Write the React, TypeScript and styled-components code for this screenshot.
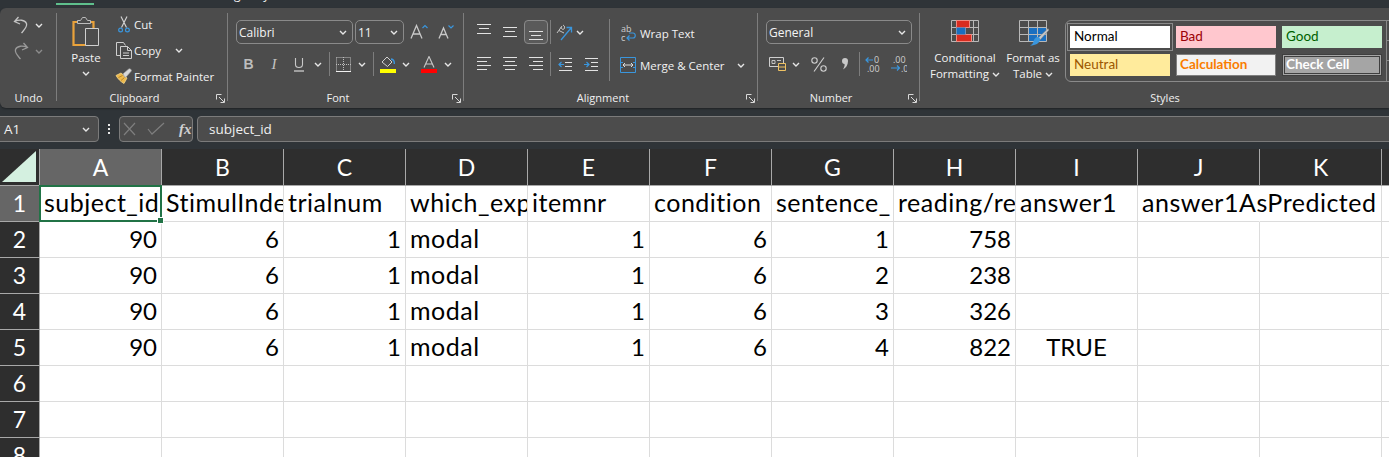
import React from 'react';
import styled, { createGlobalStyle } from 'styled-components';

const UI_FONT = '"Open Sans", "Noto Sans", sans-serif';
const CELL_FONT = 'Lato, "Open Sans", sans-serif';
const RIBBON = '#4c4c4c';
const DARK = '#2f3438';
const LINE = '#8a8a8a';
const BLUE = '#3a96dd';

const GlobalStyle = createGlobalStyle`
  html, body { margin: 0; padding: 0; background: #fff; overflow: hidden; }
  body { font-family: ${UI_FONT}; }
`;

const Page = styled.div`
  width: 1389px;
  height: 457px;
  overflow: hidden;
  background: ${DARK};
  display: flex;
  flex-direction: column;
`;

/* tab strip, only the bottom few pixels are on screen */
const TabStrip = styled.div`
  height: 8px;
  flex: none;
  overflow: hidden;
  display: flex;
  align-items: flex-end;
  padding-bottom: 3px;
  box-sizing: border-box;
`;
const TabMark = styled.div`
  width: 38px;
  height: 2px;
  margin-left: 56px;
  background: #5fbf8c;
  flex: none;
`;
const TabText = styled.div`
  margin-left: 126px;
  margin-bottom: 3px;
  font-size: 12px;
  line-height: 14px;
  color: #f0f0f0;
  white-space: nowrap;
  flex: none;
`;

const Ribbon = styled.div`
  height: 100px;
  flex: none;
  display: flex;
  background: ${RIBBON};
  border-radius: 6px 0 0 6px;
  box-shadow: 0 1px 2px rgba(0, 0, 0, 0.35);
  color: #f2f2f2;
  font-size: 11.5px;
`;

const Group = styled.div<{ $w: number; $last?: boolean }>`
  position: relative;
  width: ${(p) => p.$w}px;
  flex: none;
  display: flex;
  flex-direction: column;
  &::after {
    content: '';
    display: ${(p) => (p.$last ? 'none' : 'block')};
    position: absolute;
    right: 0;
    top: 5px;
    bottom: 7px;
    width: 1px;
    background: #7d7d7d;
  }
`;
const Body = styled.div<{ $pt?: number; $pl?: number }>`
  height: 82px;
  box-sizing: border-box;
  padding-top: ${(p) => p.$pt ?? 12}px;
  padding-left: ${(p) => p.$pl ?? 0}px;
  display: flex;
`;
const Footer = styled.div`
  height: 16px;
  display: flex;
  align-items: center;
`;
const Label = styled.div`
  flex: 1;
  text-align: center;
  font-size: 11px;
  line-height: 16px;
  color: #f0f0f0;
`;
const LauncherSlot = styled.div`
  width: 16px;
  box-sizing: border-box;
  padding-left: 4px;
  display: flex;
  align-items: center;
`;

const Stack = styled.div<{ $gap?: number; $mt?: number }>`
  display: flex;
  flex-direction: column;
  gap: ${(p) => p.$gap ?? 8}px;
  margin-top: ${(p) => p.$mt ?? 0}px;
`;
const Row = styled.div<{ $h?: number }>`
  height: ${(p) => p.$h ?? 24}px;
  display: flex;
  align-items: center;
  white-space: nowrap;
`;
const Slot = styled.span<{ $w: number; $ml?: number }>`
  width: ${(p) => p.$w}px;
  margin-left: ${(p) => p.$ml ?? 0}px;
  flex: none;
  display: flex;
  align-items: center;
  justify-content: center;
`;
const Boxed = styled(Slot)`
  height: 24px;
  box-sizing: border-box;
  border: 1px solid ${LINE};
  border-radius: 4px;
  background: #5a5a5a;
`;
const Divider = styled.span<{ $w: number }>`
  width: ${(p) => p.$w}px;
  height: 24px;
  flex: none;
  display: flex;
  justify-content: center;
  &::before {
    content: '';
    width: 1px;
    background: #7d7d7d;
  }
`;
const TallDivider = styled.div<{ $ml: number }>`
  width: 1px;
  height: 62px;
  margin: -1px 0 0 ${(p) => p.$ml}px;
  background: #7d7d7d;
  flex: none;
`;
const Combo = styled.div<{ $w: number; $ml?: number }>`
  width: ${(p) => p.$w}px;
  margin-left: ${(p) => p.$ml ?? 0}px;
  height: 24px;
  box-sizing: border-box;
  border: 1px solid ${LINE};
  border-radius: 5px;
  padding: 0 5px 0 2px;
  display: flex;
  align-items: center;
  justify-content: space-between;
  font-size: 12px;
  color: #f4f4f4;
  flex: none;
`;
const PasteColumn = styled.div`
  width: 56px;
  margin-left: 1px;
  flex: none;
  display: flex;
  flex-direction: column;
  align-items: center;
  padding-top: 4px;
`;
const PasteText = styled.div`
  margin-top: 3px;
  font-size: 11.5px;
  line-height: 16px;
`;
const ChevronGap = styled.div`
  margin-top: 5px;
  display: flex;
`;
const BigButton = styled.div<{ $w: number }>`
  width: ${(p) => p.$w}px;
  flex: none;
  display: flex;
  flex-direction: column;
  align-items: center;
  font-size: 11.5px;
  line-height: 16px;
`;
const BigIcon = styled.div`
  height: 30px;
  display: flex;
  align-items: flex-start;
`;
const BigLine = styled.div`
  display: flex;
  align-items: center;
  gap: 3px;
  white-space: nowrap;
`;
const Gallery = styled.div`
  margin-left: 2px;
  width: 345px;
  height: 62px;
  box-sizing: border-box;
  border: 1px solid ${LINE};
  border-radius: 6px;
  padding: 5px 0 0 4px;
  display: flex;
  flex: none;
`;
const StyleGrid = styled.div`
  display: grid;
  grid-template-columns: repeat(3, 100px);
  grid-auto-rows: 22px;
  gap: 6px;
  flex: none;
`;
const StyleCell = styled.div<{ $bg: string; $fg: string; $bold?: boolean; $frame?: string; $outline?: boolean; $pl?: number }>`
  box-sizing: border-box;
  background: ${(p) => p.$bg};
  color: ${(p) => p.$fg};
  font-family: ${CELL_FONT};
  font-size: 13.5px;
  font-weight: ${(p) => (p.$bold ? 700 : 400)};
  line-height: 18px;
  padding: 0 0 2px ${(p) => p.$pl ?? 4}px;
  border: ${(p) => p.$frame ?? 'none'};
  display: flex;
  align-items: center;
  outline: ${(p) => (p.$outline ? `1px solid ${LINE}` : 'none')};
  outline-offset: 2px;
`;
const GalleryScroll = styled.div`
  margin: -5px 0 0 4px;
  width: 20px;
  height: 60px;
  border-left: 1px solid ${LINE};
  display: grid;
  grid-template-rows: 20px 20px 20px;
`;
const ScrollStep = styled.div`
  border-bottom: 1px solid ${LINE};
  &:last-child { border-bottom: none; }
`;

const FormulaBar = styled.div`
  height: 41px;
  flex: none;
  box-sizing: border-box;
  padding-top: 8px;
  display: flex;
  color: #f0f0f0;
`;
const FieldBox = styled.div<{ $w: number; $ml: number }>`
  width: ${(p) => p.$w}px;
  margin-left: ${(p) => p.$ml}px;
  height: 26px;
  box-sizing: border-box;
  flex: none;
  border: 1px solid #7b7b7b;
  border-radius: 4px;
  background: ${RIBBON};
  display: flex;
  align-items: center;
  font-size: 13.5px;
`;
const NameText = styled.span`
  margin-left: 9px;
  flex: 1;
`;
const FormulaText = styled.span`
  margin-left: 11px;
`;
const Dots = styled.div`
  width: 2px;
  margin: 8px 0 0 9px;
  height: 10px;
  flex: none;
  background: repeating-linear-gradient(#e8e8e8 0 2px, transparent 2px 4px);
`;
const FxText = styled.span`
  font-family: "Liberation Serif", serif;
  font-style: italic;
  font-weight: 700;
  font-size: 15px;
  color: #d0d0d0;
  margin-left: 5px;
`;

const Sheet = styled.div`
  flex: 1;
  display: grid;
  grid-template-columns: 40px repeat(11, 122px) 1fr;
  grid-template-rows: 37px repeat(8, 36px);
  background: #fff;
  font-family: ${CELL_FONT};
  color: #000;
`;
const Corner = styled.div`
  background: #2e2e2e;
  border-right: 1px solid #a8a8a8;
  border-bottom: 1px solid #a8a8a8;
  display: flex;
  align-items: flex-end;
  justify-content: flex-end;
  padding: 0 3px 3px 0;
`;
const ColHead = styled.div<{ $on?: boolean }>`
  background: ${(p) => (p.$on ? '#666' : '#2e2e2e')};
  color: #fff;
  border-right: 1px solid #a8a8a8;
  border-bottom: 1px solid #a8a8a8;
  display: flex;
  align-items: center;
  justify-content: center;
  font-size: 23px;
`;
const RowHead = styled(ColHead)`
  overflow: hidden;
  padding-bottom: 1px;
  box-sizing: border-box;
`;
const Cell = styled.div<{ $align?: string; $spill?: boolean; $active?: boolean; $word?: boolean }>`
  position: relative;
  box-sizing: border-box;
  border-right: 1px solid ${(p) => (p.$spill ? 'transparent' : '#dcdcdc')};
  border-bottom: 1px solid #dcdcdc;
  padding: 0 4px 3px;
  display: flex;
  align-items: center;
  justify-content: ${(p) => p.$align ?? 'flex-start'};
  white-space: nowrap;
  overflow: ${(p) => (p.$spill || p.$active ? 'visible' : 'hidden')};
  min-width: 0;
  font-size: ${(p) => (p.$word ? 25 : 24)}px;
  letter-spacing: ${(p) => (p.$word ? 0.5 : 0)}px;
`;
const ActiveFrame = styled.div`
  position: absolute;
  left: -1px;
  top: -1px;
  width: 123px;
  height: 37px;
  border: 2px solid #217346;
  box-sizing: border-box;
  pointer-events: none;
  z-index: 2;
  &::after {
    content: '';
    position: absolute;
    right: -4px;
    bottom: -4px;
    width: 5px;
    height: 5px;
    background: #217346;
    border: 1px solid #fff;
  }
`;

/* ---- drawn icons ---- */
const Chevron = ({ dim }: { dim?: boolean }) => (
  <svg width="8" height="5" viewBox="0 0 8 5" fill="none" stroke={dim ? '#8c8c8c' : '#e6e6e6'} strokeWidth="1.4">
    <path d="M1 1l3 3 3-3" />
  </svg>
);
const Launcher = () => (
  <svg width="9" height="9" viewBox="0 0 9 9" fill="none" stroke="#d8d8d8" strokeWidth="1">
    <path d="M5.5.5H.5v5M3 3l5 5M8.5 4.5v4h-4" />
  </svg>
);
const Undo = ({ flip }: { flip?: boolean }) => (
  <svg width="16" height="18" viewBox="0 0 16 18" fill="none" stroke={flip ? '#9a9a9a' : '#c4c4c4'} strokeWidth="1.3"
    style={flip ? { transform: 'scaleX(-1)' } : undefined}>
    <path d="M5.5 1 1.5 5.500 7 8M1.5 5.500C6 3.500 12 3.500 13.500 7.500 14.500 11 11 14 8.500 17" />
  </svg>
);
const PasteIcon = () => (
  <svg width="28" height="31" viewBox="0 0 28 31">
    <path d="M1.500 6h20v23h-20z" fill="none" stroke="#e9a23b" strokeWidth="2.200" />
    <path d="M5.500 7.500V4.500h3l2-3h3l2 3h3v3z" fill="#4c4c4c" stroke="#bdbdbd" strokeWidth="1" />
    <path d="M13.500 12.500h13v17h-13z" fill="#4c4c4c" stroke="#cfcfcf" strokeWidth="1" />
  </svg>
);
const CutIcon = () => (
  <svg width="12" height="17" viewBox="0 0 12 17" fill="none" strokeWidth="1.200">
    <path d="M3 .5 8.500 11.500M9 .5 3.500 11.500" stroke="#cfcfcf" />
    <circle cx="2.600" cy="14" r="1.900" stroke={BLUE} />
    <circle cx="9.400" cy="14" r="1.900" stroke={BLUE} />
  </svg>
);
const CopyIcon = () => (
  <svg width="17" height="17" viewBox="0 0 17 17" fill="none" stroke="#cfcfcf" strokeWidth="1">
    <path d="M5.500 13.500h-5V.5h7l2 3" />
    <path d="M4.500 4.500h7l4 4v8h-11zM11.500 4.500v4h4M7 11h6M7 13.500h6" fill="#4c4c4c" />
  </svg>
);
const BrushIcon = () => (
  <svg width="18" height="16" viewBox="0 0 18 16">
    <path d="M1 7.500 6 5l6 5-3 5.500C6 14 3 11 1 7.500z" fill="#efb94a" stroke="#f5d78c" strokeWidth=".8" />
    <path d="M3.500 9.500 7.500 7.500M6 12.500l3.500-3" stroke="#a87a22" strokeWidth=".8" />
    <path d="M8 6l1.500-1.500L14 .8c1-.6 3 1 2.300 2.300L11.500 8.500 10 9.500z" fill="#d8d8d8" stroke="#9a9a9a" strokeWidth=".6" />
  </svg>
);
const GrowA = ({ up }: { up?: boolean }) => (
  <svg width={up ? 18 : 16} height="16" viewBox={up ? '0 0 18 16' : '0 0 16 16'} fill="none">
    {up ? (
      <>
        <path d="M1 14.500 6.500 1.500 12 14.500M3 10h7" stroke="#c8c8c8" strokeWidth="1.300" />
        <path d="M12.500 4 15 1.500 17.500 4" stroke={BLUE} strokeWidth="1.200" />
      </>
    ) : (
      <>
        <path d="M1 14.500 5.500 4 10 14.500M2.700 10.500h5.600" stroke="#c8c8c8" strokeWidth="1.300" />
        <path d="M10.500 1.500 13 4l2.500-2.500" stroke={BLUE} strokeWidth="1.200" />
      </>
    )}
  </svg>
);
const LetterB = styled.span`
  font-family: "Liberation Sans", sans-serif;
  font-weight: 700;
  font-size: 14px;
  color: #bdbdbd;
`;
const LetterI = styled.span`
  font-family: "Liberation Serif", serif;
  font-style: italic;
  font-size: 15px;
  color: #c4c4c4;
`;
const UnderlineIcon = () => (
  <svg width="10" height="15" viewBox="0 0 10 15" fill="none" stroke="#c8c8c8" strokeWidth="1.100">
    <path d="M1.500 1v6.500c0 4 7 4 7 0V1" />
    <path d="M0 14h10" stroke="#e4e4e4" />
  </svg>
);
const BordersIcon = () => (
  <svg width="15" height="15" viewBox="0 0 15 15" fill="none">
    <path d="M.5 .5h14v14M.5 .5v14M7.500 0v15M0 7.500h15" stroke="#bdbdbd" strokeWidth="1" strokeDasharray="1 1" />
    <path d="M0 14.500h15" stroke="#f0f0f0" strokeWidth="1" />
  </svg>
);
const FillIcon = () => (
  <svg width="16" height="17" viewBox="0 0 16 17">
    <path d="M2 6 7 1l5 5-4.500 4.500z" fill="none" stroke="#d0d0d0" strokeWidth="1" />
    <path d="M11 3c2.500.3 3.500 2.500 3.300 5" fill="none" stroke={BLUE} strokeWidth="1.400" />
    <path d="M0 13h16v4H0z" fill="#ffff00" />
  </svg>
);
const FontColorIcon = () => (
  <svg width="16" height="17" viewBox="0 0 16 17" fill="none">
    <path d="M3 11.500 8 .5l5 11M4.700 8h6.600" stroke="#c8c8c8" strokeWidth="1.100" />
    <path d="M0 13h16v4H0z" fill="#ff0000" />
  </svg>
);
/* lines: each y with start and end of a text line */
const Lines = ({ rows }: { rows: [number, number, number][] }) => (
  <svg width="16" height="17" viewBox="0 0 16 17" stroke="#e2e2e2" strokeWidth="1" fill="none">
    {rows.map(([y, a, b]) => (
      <path key={y} d={`M${a} ${y}.5H${b}`} />
    ))}
  </svg>
);
const IndentIcon = ({ out }: { out?: boolean }) => (
  <svg width="15" height="15" viewBox="0 0 15 15" fill="none" strokeWidth="1">
    <path d="M1 1.500h13M7 5.500h7M7 9.500h7M1 13.500h13" stroke="#e2e2e2" />
    {out ? (
      <path d="M6 7.500H1M3.500 5 1 7.500 3.500 10" stroke={BLUE} strokeWidth="1.200" />
    ) : (
      <path d="M0 7.500h5M2.500 5 5 7.500 2.500 10" stroke={BLUE} strokeWidth="1.200" />
    )}
  </svg>
);
const OrientIcon = () => (
  <svg width="17" height="17" viewBox="0 0 17 17" fill="none">
    <path d="M1 9 6 2M3 6.500 8 9M7 1c2 1 2 3 1 4S5 5 5 3" stroke="#c4c4c4" strokeWidth="1" />
    <path d="M5 16 15 4M10.500 3.500H15.500V8.500" stroke={BLUE} strokeWidth="1.300" />
  </svg>
);
const SmallGlyphs = styled.text`
  font-family: ${UI_FONT};
  font-size: 9px;
  fill: #cfcfcf;
`;
const WrapIcon = () => (
  <svg width="15" height="17" viewBox="0 0 15 17" fill="none">
    <SmallGlyphs x="0" y="7">ab</SmallGlyphs>
    <SmallGlyphs x="0" y="16">c</SmallGlyphs>
    <path d="M6 13h6c3 0 3-5 0-5H8M8.500 10.500 6 13l2.500 2.500" stroke={BLUE} strokeWidth="1.200" />
  </svg>
);
const MergeIcon = () => (
  <svg width="16" height="16" viewBox="0 0 16 16" fill="none">
    <path d="M.5 .5h15v15H.5zM0 5.500h3M13 5.500h3M0 10.500h3M13 10.500h3" stroke={BLUE} strokeWidth="1" />
    <path d="M3 8h10M5 6 3 8l2 2M11 6l2 2-2 2" stroke="#dcdcdc" strokeWidth="1" />
  </svg>
);
const AccountingIcon = () => (
  <svg width="17" height="14" viewBox="0 0 17 14" fill="none">
    <path d="M.5 .5h14v9H.5z" stroke="#cfcfcf" />
    <path d="M3 3.500h3v3H3zM8 3.500h4" stroke="#cfcfcf" strokeWidth=".9" />
    <path d="M9.500 6.500h7v7h-7zM9.500 10h7" fill="#4c4c4c" stroke="#efc263" />
  </svg>
);
const PercentIcon = () => (
  <svg width="16" height="15" viewBox="0 0 16 15" fill="none" stroke="#d0d0d0" strokeWidth="1.100">
    <circle cx="3.500" cy="3.500" r="2.700" />
    <circle cx="12.500" cy="11.500" r="2.700" />
    <path d="M13 .5 3 14.500" />
  </svg>
);
const CommaIcon = () => (
  <svg width="8" height="12" viewBox="0 0 8 12" fill="#c8c8c8">
    <path d="M1 3a3 3 0 1 1 6 0c0 4-2 7-5 8.500 1-2 2-4 1.500-5.500C2 6 1 5 1 3z" />
  </svg>
);
const DecimalIcon = ({ more }: { more?: boolean }) => (
  <svg width="16" height="16" viewBox="0 0 16 16" fill="none">
    {more ? (
      <>
        <SmallGlyphs x="9" y="7">0</SmallGlyphs>
        <SmallGlyphs x="2" y="15.500">.00</SmallGlyphs>
        <path d="M8 4H1M3.500 1.500 1 4l2.500 2.500" stroke={BLUE} strokeWidth="1.200" />
      </>
    ) : (
      <>
        <SmallGlyphs x="2" y="7">.00</SmallGlyphs>
        <SmallGlyphs x="10" y="15.500">.0</SmallGlyphs>
        <path d="M0 12h8M6 9.500 8.500 12 6 14.500" stroke={BLUE} strokeWidth="1.200" />
      </>
    )}
  </svg>
);
const CondFormatIcon = () => (
  <svg width="28" height="22" viewBox="0 0 28 22">
    <path d="M.5 .5h27v21H.5zM.5 7.500h27M.5 14.500h27M5.500 .5v21M14.500 .5v21M22.500 .5v21" fill="none" stroke="#b8b8b8" strokeWidth="1" />
    <path d="M5.500 .5h13v7h-13zM5.500 14.500h15v7h-15z" fill="#d92c20" stroke="#f08a80" strokeWidth="1" />
    <path d="M5.500 7.500h9v7h-9z" fill="#1a6fc0" />
  </svg>
);
const TableIcon = () => (
  <svg width="32" height="27" viewBox="0 0 32 27">
    <path d="M11.500 7.500h18v14h-18z" fill="#1a6fc0" />
    <path d="M2.500 .5h27v21h-27zM2.500 7.500h27M2.500 14.500h27M11.500 .5v21M20.500 .5v21" fill="none" stroke="#b8b8b8" strokeWidth="1" />
    <path d="M31 8.500 21 18l2 2L32 10z" fill="#c8c8c8" stroke="#777" strokeWidth=".5" />
    <path d="M20 17c2-.5 3.500 1 3 3-.7 3-4 5.500-10 5.500 2-1 3-2 3.500-4 .4-2 1.500-4 3.500-4.500z" fill="#3a96dd" />
  </svg>
);
const CrossCheck = () => (
  <svg width="48" height="14" viewBox="0 0 48 14" fill="none" stroke="#7e7e7e" strokeWidth="1.200">
    <path d="M1 1l11 12M12 1 1 13M25 7l4 5L41 1" />
  </svg>
);

const COLUMNS = ['A', 'B', 'C', 'D', 'E', 'F', 'G', 'H', 'I', 'J', 'K'];
const HEADERS = ['subject_id', 'StimulInde', 'trialnum', 'which_exp', 'itemnr', 'condition', 'sentence_', 'reading/re', 'answer1', 'answer1AsPredicted', ''];
const DATA: string[][] = [
  ['90', '6', '1', 'modal', '1', '6', '1', '758', '', '', ''],
  ['90', '6', '1', 'modal', '1', '6', '2', '238', '', '', ''],
  ['90', '6', '1', 'modal', '1', '6', '3', '326', '', '', ''],
  ['90', '6', '1', 'modal', '1', '6', '4', '822', 'TRUE', '', ''],
];

const alignFor = (value: string) => {
  if (value === 'TRUE') return 'center';
  return /^\d+$/.test(value) ? 'flex-end' : 'flex-start';
};

const App = () => {
  const emptyRows = [6, 7, 8];
  return (
    <Page>
      <GlobalStyle />
      <TabStrip>
        <TabMark />
        <TabText>Page Layout</TabText>
      </TabStrip>
      <Ribbon>
        <Group $w={57}>
          <Body $pt={4}>
            <Stack $gap={0}>
              <Row $h={26}>
                <Slot $w={28} $ml={7}><Undo /></Slot>
                <Slot $w={8}><Chevron /></Slot>
              </Row>
              <Row $h={26}>
                <Slot $w={28} $ml={7}><Undo flip /></Slot>
                <Slot $w={8}><Chevron dim /></Slot>
              </Row>
            </Stack>
          </Body>
          <Footer><Label>Undo</Label></Footer>
        </Group>

        <Group $w={171}>
          <Body $pt={4}>
            <PasteColumn>
              <PasteIcon />
              <PasteText>Paste</PasteText>
              <ChevronGap><Chevron /></ChevronGap>
            </PasteColumn>
            <Stack $gap={0} $mt={-1}>
              <Row $h={26}><Slot $w={20}><CutIcon /></Slot>Cut</Row>
              <Row $h={26}>
                <Slot $w={20}><CopyIcon /></Slot>Copy
                <Slot $w={8} $ml={14}><Chevron /></Slot>
              </Row>
              <Row $h={26}><Slot $w={20}><BrushIcon /></Slot>Format Painter</Row>
            </Stack>
          </Body>
          <Footer>
            <Label>Clipboard</Label>
            <LauncherSlot><Launcher /></LauncherSlot>
          </Footer>
        </Group>

        <Group $w={236}>
          <Body $pl={8}>
            <Stack>
              <Row>
                <Combo $w={117}>Calibri<Chevron /></Combo>
                <Combo $w={49} $ml={2}>11<Chevron /></Combo>
                <Slot $w={24} $ml={3}><GrowA up /></Slot>
                <Slot $w={24} $ml={3}><GrowA /></Slot>
              </Row>
              <Row>
                <Slot $w={25}><LetterB>B</LetterB></Slot>
                <Slot $w={26}><LetterI>I</LetterI></Slot>
                <Slot $w={24}><UnderlineIcon /></Slot>
                <Slot $w={14}><Chevron /></Slot>
                <Divider $w={8} />
                <Slot $w={21}><BordersIcon /></Slot>
                <Slot $w={16}><Chevron /></Slot>
                <Divider $w={6} />
                <Slot $w={24}><FillIcon /></Slot>
                <Slot $w={12}><Chevron /></Slot>
                <Slot $w={26} $ml={4}><FontColorIcon /></Slot>
                <Slot $w={11}><Chevron /></Slot>
              </Row>
            </Stack>
          </Body>
          <Footer>
            <Label>Font</Label>
            <LauncherSlot><Launcher /></LauncherSlot>
          </Footer>
        </Group>

        <Group $w={294}>
          <Body $pl={7}>
            <Stack>
              <Row>
                <Slot $w={26}><Lines rows={[[0, 1, 15], [4, 3, 13], [9, 1, 15]]} /></Slot>
                <Slot $w={26}><Lines rows={[[3, 1, 15], [7, 3, 13], [12, 1, 15]]} /></Slot>
                <Boxed $w={24} $ml={1}><Lines rows={[[7, 1, 15], [11, 3, 13], [15, 1, 15]]} /></Boxed>
                <Divider $w={4} />
                <Slot $w={24}><OrientIcon /></Slot>
                <Slot $w={8}><Chevron /></Slot>
              </Row>
              <Row>
                <Slot $w={26}><Lines rows={[[1, 1, 15], [5, 1, 11], [9, 1, 15], [13, 1, 11]]} /></Slot>
                <Slot $w={26}><Lines rows={[[1, 1, 15], [5, 3, 13], [9, 1, 15], [13, 3, 13]]} /></Slot>
                <Slot $w={25}><Lines rows={[[1, 1, 15], [5, 5, 15], [9, 1, 15], [13, 5, 15]]} /></Slot>
                <Divider $w={4} />
                <Slot $w={26}><IndentIcon out /></Slot>
                <Slot $w={26}><IndentIcon /></Slot>
              </Row>
            </Stack>
            <TallDivider $ml={5} />
            <Stack $gap={0} $mt={-3}>
              <Row $h={32}>
                <Slot $w={16} $ml={10}><WrapIcon /></Slot>
                <Slot $w={4} />
                Wrap Text
              </Row>
              <Row $h={32}>
                <Slot $w={16} $ml={10}><MergeIcon /></Slot>
                <Slot $w={4} />
                Merge &amp; Center
                <Slot $w={8} $ml={12}><Chevron /></Slot>
              </Row>
            </Stack>
          </Body>
          <Footer>
            <Label>Alignment</Label>
            <LauncherSlot><Launcher /></LauncherSlot>
          </Footer>
        </Group>

        <Group $w={162}>
          <Body $pl={8}>
            <Stack>
              <Row><Combo $w={146}>General<Chevron /></Combo></Row>
              <Row>
                <Slot $w={22}><AccountingIcon /></Slot>
                <Slot $w={16}><Chevron /></Slot>
                <Slot $w={26} $ml={2}><PercentIcon /></Slot>
                <Slot $w={26}><CommaIcon /></Slot>
                <Divider $w={2} />
                <Slot $w={26}><DecimalIcon more /></Slot>
                <Slot $w={26}><DecimalIcon /></Slot>
              </Row>
            </Stack>
          </Body>
          <Footer>
            <Label>Number</Label>
            <LauncherSlot><Launcher /></LauncherSlot>
          </Footer>
        </Group>

        <Group $w={490} $last>
          <Body $pl={7}>
            <BigButton $w={76}>
              <BigIcon><CondFormatIcon /></BigIcon>
              <BigLine>Conditional</BigLine>
              <BigLine>Formatting <Chevron /></BigLine>
            </BigButton>
            <BigButton $w={60}>
              <BigIcon><TableIcon /></BigIcon>
              <BigLine>Format as</BigLine>
              <BigLine>Table <Chevron /></BigLine>
            </BigButton>
            <Gallery>
              <StyleGrid>
                <StyleCell $bg="#fff" $fg="#000" $outline>Normal</StyleCell>
                <StyleCell $bg="#ffc7ce" $fg="#9c0006">Bad</StyleCell>
                <StyleCell $bg="#c6efce" $fg="#006100">Good</StyleCell>
                <StyleCell $bg="#ffeb9c" $fg="#9c5700">Neutral</StyleCell>
                <StyleCell $bg="#f2f2f2" $fg="#fa7d00" $bold $frame="1px solid #7f7f7f" $pl={3}>Calculation</StyleCell>
                <StyleCell $bg="#a5a5a5" $fg="#fff" $bold $frame="3px double #3f3f3f" $pl={1}>Check Cell</StyleCell>
              </StyleGrid>
              <GalleryScroll>
                <ScrollStep />
                <ScrollStep />
                <ScrollStep />
              </GalleryScroll>
            </Gallery>
          </Body>
          <Footer><Label>Styles</Label></Footer>
        </Group>
      </Ribbon>

      <FormulaBar>
        <FieldBox $w={105} $ml={-6}>
          <NameText>A1</NameText>
          <Slot $w={24}><Chevron /></Slot>
        </FieldBox>
        <Dots />
        <FieldBox $w={74} $ml={9}>
          <Slot $w={54}><CrossCheck /></Slot>
          <FxText>fx</FxText>
        </FieldBox>
        <FieldBox $w={1200} $ml={4}>
          <FormulaText>subject_id</FormulaText>
        </FieldBox>
      </FormulaBar>

      <Sheet>
        <Corner>
          <svg width="34" height="31" viewBox="0 0 34 31"><path d="M34 0v31H0z" fill="#d4f0e0" /></svg>
        </Corner>
        {COLUMNS.map((col) => (
          <ColHead key={col} $on={col === 'A'}>{col}</ColHead>
        ))}
        <ColHead />

        <RowHead $on>1</RowHead>
        {HEADERS.map((text, i) => (
          <Cell key={i} $spill={i === 9} $active={i === 0} $word>
            {i === 0 && <ActiveFrame />}
            {text}
          </Cell>
        ))}
        <Cell />

        {DATA.map((row, r) => (
          <React.Fragment key={r}>
            <RowHead>{r + 2}</RowHead>
            {row.map((value, c) => (
              <Cell key={c} $align={alignFor(value)} $word={value === 'modal'}>{value}</Cell>
            ))}
            <Cell />
          </React.Fragment>
        ))}

        {emptyRows.map((n) => (
          <React.Fragment key={n}>
            <RowHead>{n}</RowHead>
            {COLUMNS.map((col) => (
              <Cell key={col} />
            ))}
            <Cell />
          </React.Fragment>
        ))}
      </Sheet>
    </Page>
  );
};

export default App;
